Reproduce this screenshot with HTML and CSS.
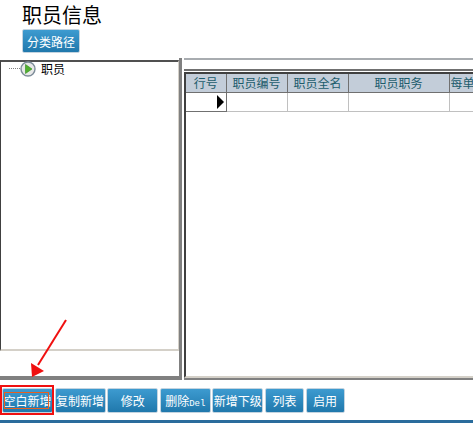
FILE: index.html
```html
<!DOCTYPE html>
<html lang="zh-CN">
<head>
  <meta charset="UTF-8">
  <title>职员信息</title>
  <link rel="stylesheet" href="styles.css">
</head>
<body>

  <h1 class="title">职员信息</h1>
  <button class="btn path-btn">分类路径</button>

  <div class="panes">
    <!-- Tree -->
    <div class="left-pane">
      <div class="tree">
        <div class="tree-row">
          <span class="tree-dots"></span>
          <svg class="tree-icon" width="16" height="16" viewBox="0 0 16 16">
            <circle cx="8" cy="8" r="7" fill="#e8e8e8" stroke="#7d8c99" stroke-width="1.4"/>
            <path d="M5.5 3.5 L12 8 L5.5 12.5 Z" fill="#52b030" stroke="#2f8a1c" stroke-width="0.6"/>
          </svg>
          <span class="tree-label">职员</span>
        </div>
      </div>
    </div>

    <!-- Grid -->
    <div class="right-pane">
      <div class="right-top"></div>
      <div class="grid-wrap">
        <table class="grid">
          <colgroup>
            <col class="col-no">
            <col class="col-code">
            <col class="col-name">
            <col class="col-job">
            <col class="col-rest">
          </colgroup>
          <tr>
            <th>行号</th>
            <th>职员编号</th>
            <th>职员全名</th>
            <th>职员职务</th>
            <th class="cut">每单</th>
          </tr>
          <tr>
            <td class="row-head"><span class="row-arrow"></span></td>
            <td></td>
            <td></td>
            <td></td>
            <td></td>
          </tr>
        </table>
      </div>
    </div>
  </div>

  <div class="toolbar">
    <button class="btn tool-btn first">空白新增</button>
    <button class="btn tool-btn">复制新增</button>
    <button class="btn tool-btn">修改</button>
    <button class="btn tool-btn">删除<span class="mono">Del</span></button>
    <button class="btn tool-btn">新增下级</button>
    <button class="btn tool-btn small">列表</button>
    <button class="btn tool-btn small">启用</button>
  </div>
  <div class="bottom-bar"></div>

  <!-- Annotation -->
  <svg class="arrow" width="80" height="70" viewBox="0 0 80 70">
    <path d="M66 1 L38 46" stroke="#f01010" stroke-width="2" fill="none"/>
    <path d="M32 58 L31 44 L44 52 Z" fill="#f01010"/>
  </svg>
  <div class="red-box"></div>

</body>
</html>
```

FILE: styles.css
```css
/* General */
html, body {
  margin: 0;
  padding: 0;
  height: 423px;
  overflow: hidden;
  background: #fff;
  font-family: "Noto Sans CJK SC", "Liberation Sans", sans-serif;
  position: relative;
}

.title {
  margin: 0;
  padding-left: 22px;
  height: 29px;
  line-height: 29px;
  font-size: 20px;
  font-weight: normal;
  color: #000;
}

/* Buttons */
.btn {
  display: block;
  padding: 0;
  border: 1px solid #c4d4e0;
  border-radius: 2px;
  background: linear-gradient(#3d9bd0, #2078ac);
  color: #fff;
  font-family: inherit;
  font-size: 12px;
  white-space: nowrap;
  overflow: hidden;
}

.path-btn {
  margin-left: 22px;
  width: 58px;
  height: 24px;
}

/* Panes */
.panes {
  display: flex;
  height: 322px;
  margin-top: 5px;
}

.left-pane {
  width: 179px;
  padding-top: 2px;
  border-right: 3px solid #808080;
  border-bottom: 4px solid #808080;
  background: #fff;
}

.tree {
  box-sizing: border-box;
  height: 291px;
  border-top: 2px solid #505050;
  border-left: 1px solid #404040;
  border-right: 1px solid #d4d0c8;
  border-bottom: 2px solid #d4d0c8;
}

.tree-row {
  display: flex;
  align-items: center;
  height: 15px;
  margin-top: -1px;
  padding-left: 8px;
}

.tree-dots {
  width: 11px;
  border-top: 1px dotted #808080;
}

.tree-icon {
  flex: none;
}

.tree-label {
  margin-left: 5px;
  font-size: 12px;
  line-height: 15px;
  color: #000;
}

.right-pane {
  flex: 1;
  min-width: 0;
  margin-left: 2px;
  display: flex;
  flex-direction: column;
  overflow: hidden;
  border-bottom: 2px solid #808080;
}

.right-top {
  height: 9px;
  flex: none;
  border-top: 2px solid #a8acb0;
  border-bottom: 2px solid #707070;
}

.grid-wrap {
  flex: 1;
  margin-top: 1px;
  border-left: 2px solid #404040;
  border-bottom: 2px solid #d4d0c8;
  overflow: hidden;
}

/* Grid */
.grid {
  border-collapse: collapse;
  table-layout: fixed;
  width: 303px;
  border-top: 2px solid #404040;
}

.col-no { width: 40px; }
.col-code { width: 61px; }
.col-name { width: 61px; }
.col-job { width: 101px; }
.col-rest { width: 40px; }

.grid th {
  height: 18px;
  padding: 0;
  background: #c3cdd9;
  border-right: 1px solid #707070;
  border-bottom: 1px solid #707070;
  color: #1c5c6c;
  font-size: 12px;
  font-weight: normal;
  line-height: 16px;
  white-space: nowrap;
  overflow: hidden;
}

.grid th.cut {
  text-align: left;
  padding-left: 1px;
}

.grid td {
  height: 18px;
  padding: 0;
  border-right: 1px solid #c0c0c0;
  border-bottom: 1px solid #c0c0c0;
}

.grid td.row-head {
  border-right-color: #707070;
  border-bottom-color: #707070;
}

.row-arrow {
  display: block;
  width: 0;
  margin-left: auto;
  margin-right: 2px;
  border-left: 7px solid #000;
  border-top: 7px solid transparent;
  border-bottom: 7px solid transparent;
}

/* Toolbar */
.toolbar {
  display: flex;
  gap: 1.6px;
  height: 25px;
  margin-top: 8px;
  padding-left: 2px;
}

.tool-btn {
  position: relative;
  width: 51px;
  height: 25px;
  text-align: center;
  flex: none;
}

.tool-btn.small {
  width: 39px;
}

/* focus rectangle */
.tool-btn.first::after {
  content: "";
  position: absolute;
  top: 3px;
  bottom: 3px;
  left: 1px;
  right: 3px;
  border: 1px solid #e86020;
}

.mono {
  font-family: "Liberation Mono", monospace;
  font-size: 9px;
}

.bottom-bar {
  height: 3px;
  margin-top: 7px;
  background: #2a6c9c;
}

/* Annotation on top of the screenshot */
.arrow {
  position: absolute;
  left: 0;
  top: 319px;
}

.red-box {
  position: absolute;
  left: 0;
  top: 385px;
  width: 50px;
  height: 26px;
  border: 2px solid #f01010;
}
```
